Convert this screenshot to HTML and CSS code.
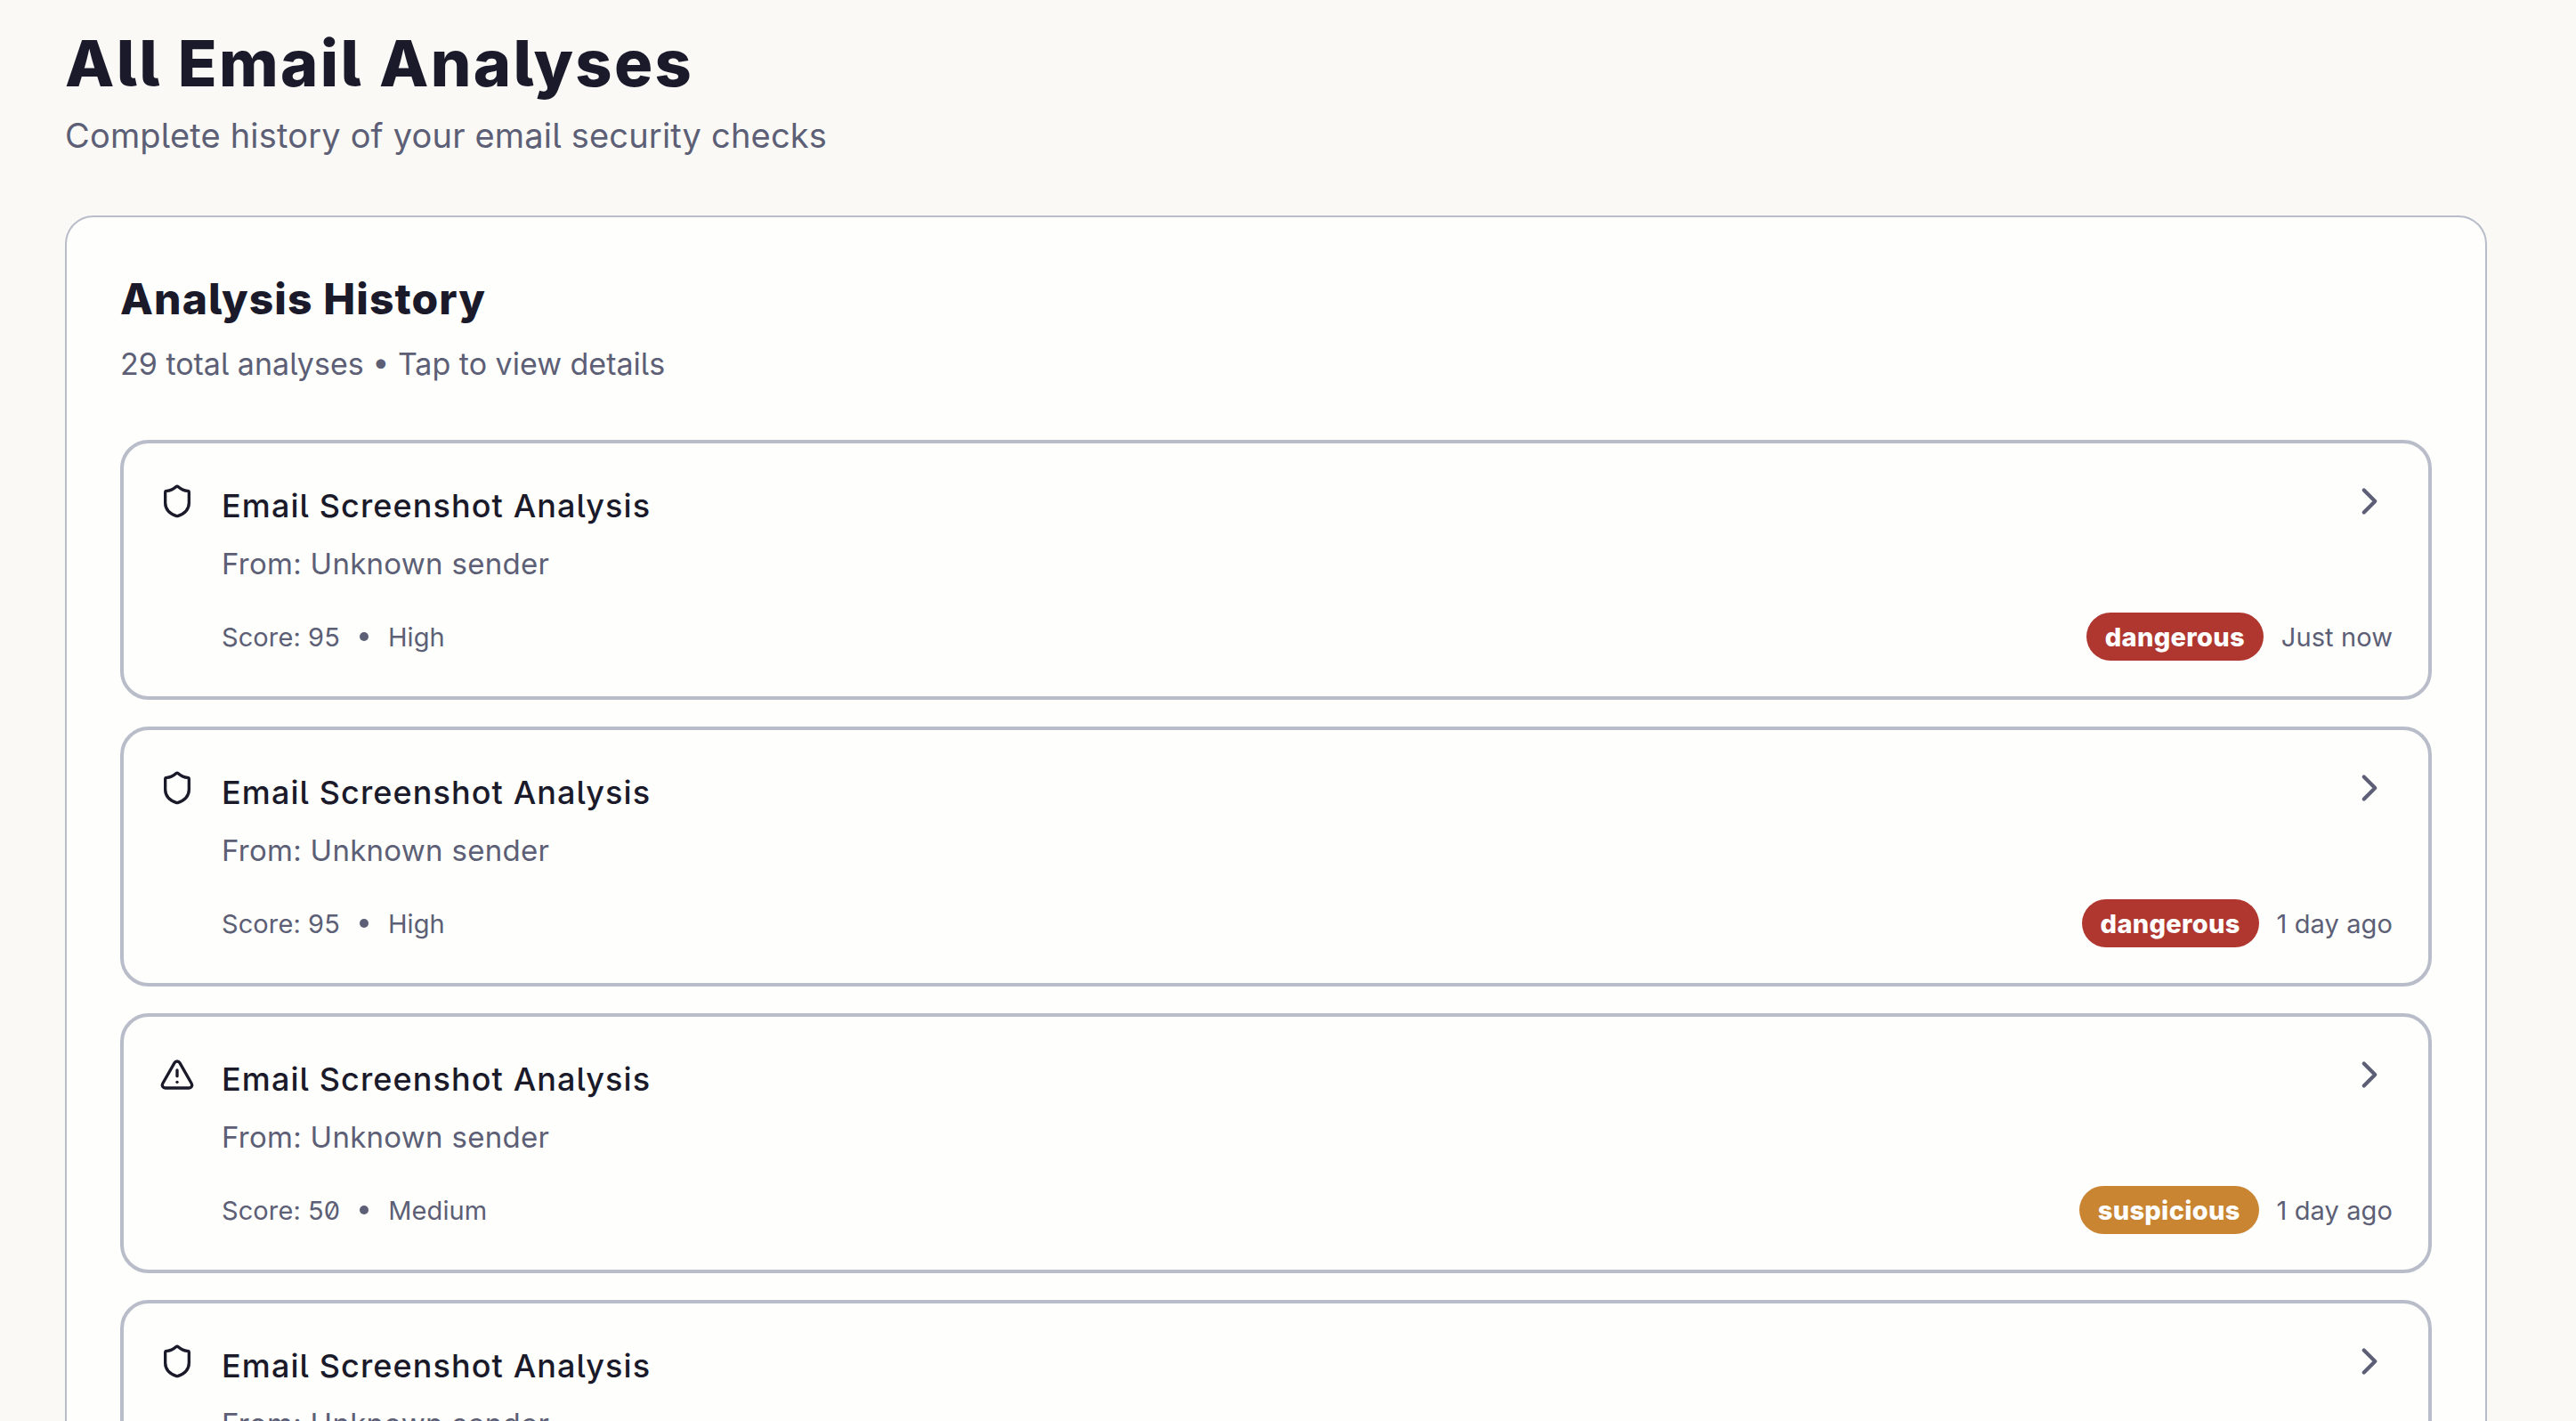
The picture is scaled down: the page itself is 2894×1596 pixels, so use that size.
FILE: index.html
```html
<!DOCTYPE html>
<html lang="en">
<head>
    <meta charset="UTF-8">
    <title>All Email Analyses</title>
    <link rel="stylesheet" href="styles.css">
</head>
<body>
    <header class="page-header">
        <h1>All Email Analyses</h1>
        <p>Complete history of your email security checks</p>
    </header>

    <section class="history-card">
        <h2>Analysis History</h2>
        <p class="history-sub">29 total analyses • Tap to view details</p>

        <div class="history-list">
            <article class="item">
                <svg class="item-icon" viewBox="0 0 24 24"><path d="M20 13c0 5-3.5 7.5-7.66 8.95a1 1 0 0 1-.67-.01C7.5 20.5 4 18 4 13V6a1 1 0 0 1 1-1c2 0 4.5-1.2 6.24-2.72a1.17 1.17 0 0 1 1.52 0C14.51 3.81 17 5 19 5a1 1 0 0 1 1 1z"/></svg>
                <div class="item-body">
                    <div class="item-head">
                        <div>
                            <div class="item-title">Email Screenshot Analysis</div>
                            <div class="item-from">From: Unknown sender</div>
                        </div>
                        <svg class="item-chevron" viewBox="0 0 24 24"><path d="m9 18 6-6-6-6"/></svg>
                    </div>
                    <div class="item-meta">
                        <div class="meta-left"><span>Score: 95</span><span class="dot"></span><span>High</span></div>
                        <div class="meta-right"><span class="badge dangerous">dangerous</span><span>Just now</span></div>
                    </div>
                </div>
            </article>

            <article class="item">
                <svg class="item-icon" viewBox="0 0 24 24"><path d="M20 13c0 5-3.5 7.5-7.66 8.95a1 1 0 0 1-.67-.01C7.5 20.5 4 18 4 13V6a1 1 0 0 1 1-1c2 0 4.5-1.2 6.24-2.72a1.17 1.17 0 0 1 1.52 0C14.51 3.81 17 5 19 5a1 1 0 0 1 1 1z"/></svg>
                <div class="item-body">
                    <div class="item-head">
                        <div>
                            <div class="item-title">Email Screenshot Analysis</div>
                            <div class="item-from">From: Unknown sender</div>
                        </div>
                        <svg class="item-chevron" viewBox="0 0 24 24"><path d="m9 18 6-6-6-6"/></svg>
                    </div>
                    <div class="item-meta">
                        <div class="meta-left"><span>Score: 95</span><span class="dot"></span><span>High</span></div>
                        <div class="meta-right"><span class="badge dangerous">dangerous</span><span>1 day ago</span></div>
                    </div>
                </div>
            </article>

            <article class="item">
                <svg class="item-icon" viewBox="0 0 24 24"><path d="m21.73 18-8-14a2 2 0 0 0-3.48 0l-8 14A2 2 0 0 0 4 21h16a2 2 0 0 0 1.73-3"/><path d="M12 9v4"/><path d="M12 17h.01"/></svg>
                <div class="item-body">
                    <div class="item-head">
                        <div>
                            <div class="item-title">Email Screenshot Analysis</div>
                            <div class="item-from">From: Unknown sender</div>
                        </div>
                        <svg class="item-chevron" viewBox="0 0 24 24"><path d="m9 18 6-6-6-6"/></svg>
                    </div>
                    <div class="item-meta">
                        <div class="meta-left"><span>Score: 50</span><span class="dot"></span><span>Medium</span></div>
                        <div class="meta-right"><span class="badge suspicious">suspicious</span><span>1 day ago</span></div>
                    </div>
                </div>
            </article>

            <article class="item">
                <svg class="item-icon" viewBox="0 0 24 24"><path d="M20 13c0 5-3.5 7.5-7.66 8.95a1 1 0 0 1-.67-.01C7.5 20.5 4 18 4 13V6a1 1 0 0 1 1-1c2 0 4.5-1.2 6.24-2.72a1.17 1.17 0 0 1 1.52 0C14.51 3.81 17 5 19 5a1 1 0 0 1 1 1z"/></svg>
                <div class="item-body">
                    <div class="item-head">
                        <div>
                            <div class="item-title">Email Screenshot Analysis</div>
                            <div class="item-from">From: Unknown sender</div>
                        </div>
                        <svg class="item-chevron" viewBox="0 0 24 24"><path d="m9 18 6-6-6-6"/></svg>
                    </div>
                </div>
            </article>
        </div>
    </section>
</body>
</html>
```

FILE: styles.css
```css
* {
    box-sizing: border-box;
    margin: 0;
    padding: 0;
}

html, body {
    height: 100%;
    overflow: hidden;
}

body {
    background: #faf9f6;
    color: #1a1a2a;
    font-family: 'Inter', 'Liberation Sans', sans-serif;
    font-feature-settings: "ss02", "cv05";
    padding: 31px 100px 0 73px;
}

.page-header h1 {
    font-size: 72px;
    line-height: 80px;
    font-weight: 800;
    letter-spacing: 2.3px;
}

.page-header p {
    font-size: 38px;
    line-height: 56px;
    margin-top: 13px;
    letter-spacing: 0.18px;
    color: #5c5f75;
}

.history-card {
    margin-top: 62px;
    background: #fefefc;
    border: 2px solid #b8bdc9;
    border-radius: 32px;
    padding: 62px 60px 60px;
}

.history-card h2 {
    font-size: 48px;
    line-height: 60px;
    font-weight: 800;
    letter-spacing: 1.1px;
}

.history-sub {
    font-size: 34px;
    line-height: 50px;
    margin-top: 18px;
    color: #5c5f75;
}

.history-list {
    margin-top: 60px;
    display: flex;
    flex-direction: column;
    gap: 30px;
}

.item {
    display: flex;
    align-items: flex-start;
    gap: 30px;
    padding: 40px;
    border: 4px solid #b8bdc9;
    border-radius: 32px;
    background: #fefefc;
}

.item svg {
    fill: none;
    stroke-width: 2;
    stroke-linecap: round;
    stroke-linejoin: round;
    flex-shrink: 0;
}

.item-icon {
    width: 40px;
    height: 40px;
    margin-top: 5px;
    stroke: #1a1a2a;
}

.item-body {
    flex: 1;
    min-width: 0;
}

.item-head {
    display: flex;
    justify-content: space-between;
    align-items: flex-start;
}

.item-title {
    font-size: 36px;
    line-height: 56px;
    font-weight: 500;
    letter-spacing: 1.1px;
    padding-top: 2px;
}

.item-from {
    font-size: 33px;
    line-height: 50px;
    margin-top: 12px;
    letter-spacing: 0.28px;
    color: #5c5f75;
}

.item-chevron {
    width: 50px;
    height: 50px;
    margin-right: 1px;
    stroke: #5c5f75;
}

.item-meta {
    display: flex;
    justify-content: space-between;
    align-items: center;
    margin-top: 30px;
    font-size: 29px;
    letter-spacing: 0.1px;
    color: #5c5f75;
}

.meta-left, .meta-right {
    display: flex;
    align-items: center;
}

.dot {
    width: 10px;
    height: 10px;
    margin: 0 22px;
    border-radius: 50%;
    background: #5c5f75;
}

.badge {
    height: 54px;
    padding: 0 21px;
    margin-right: 20px;
    border-radius: 27px;
    display: flex;
    align-items: center;
    color: #fff;
    font-weight: 800;
    letter-spacing: 0.3px;
}

.dangerous {
    background: #af372f;
}

.suspicious {
    background: #c98532;
}
```
